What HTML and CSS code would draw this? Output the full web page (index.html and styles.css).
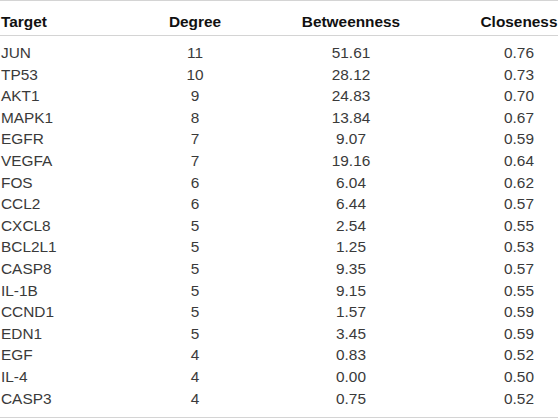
FILE: index.html
```html
<!DOCTYPE html>
<html>
<head>
<meta charset="utf-8">
<link rel="stylesheet" href="styles.css">
</head>
<body>
<table class="data">
  <colgroup>
    <col class="c-target">
    <col class="c-degree">
    <col class="c-between">
    <col class="c-close">
  </colgroup>
  <thead>
    <tr><th class="left">Target</th><th>Degree</th><th>Betweenness</th><th>Closeness</th></tr>
  </thead>
  <tbody>
    <tr><td class="left">JUN</td><td>11</td><td>51.61</td><td>0.76</td></tr>
    <tr><td class="left">TP53</td><td>10</td><td>28.12</td><td>0.73</td></tr>
    <tr><td class="left">AKT1</td><td>9</td><td>24.83</td><td>0.70</td></tr>
    <tr><td class="left">MAPK1</td><td>8</td><td>13.84</td><td>0.67</td></tr>
    <tr><td class="left">EGFR</td><td>7</td><td>9.07</td><td>0.59</td></tr>
    <tr><td class="left">VEGFA</td><td>7</td><td>19.16</td><td>0.64</td></tr>
    <tr><td class="left">FOS</td><td>6</td><td>6.04</td><td>0.62</td></tr>
    <tr><td class="left">CCL2</td><td>6</td><td>6.44</td><td>0.57</td></tr>
    <tr><td class="left">CXCL8</td><td>5</td><td>2.54</td><td>0.55</td></tr>
    <tr><td class="left">BCL2L1</td><td>5</td><td>1.25</td><td>0.53</td></tr>
    <tr><td class="left">CASP8</td><td>5</td><td>9.35</td><td>0.57</td></tr>
    <tr><td class="left">IL-1B</td><td>5</td><td>9.15</td><td>0.55</td></tr>
    <tr><td class="left">CCND1</td><td>5</td><td>1.57</td><td>0.59</td></tr>
    <tr><td class="left">EDN1</td><td>5</td><td>3.45</td><td>0.59</td></tr>
    <tr><td class="left">EGF</td><td>4</td><td>0.83</td><td>0.52</td></tr>
    <tr><td class="left">IL-4</td><td>4</td><td>0.00</td><td>0.50</td></tr>
    <tr><td class="left">CASP3</td><td>4</td><td>0.75</td><td>0.52</td></tr>
  </tbody>
</table>
</body>
</html>
```
FILE: styles.css
```css
html, body {
  margin: 0;
  padding: 0;
  background: #ffffff;
}
.data {
  width: 558px;
  table-layout: fixed;
  border-collapse: collapse;
  font-family: "Liberation Sans", Arial, Helvetica, sans-serif;
  font-size: 15.4px;
}
.c-target { width: 168px; }
.c-degree { width: 54px; }
.c-between { width: 258px; }
.c-close { width: 78px; }

.data th, .data td {
  padding: 0;
  text-align: center;
  white-space: nowrap;
}
.data th {
  color: #111111;
  font-weight: bold;
  line-height: 21px;
  padding-top: 10px;
  padding-bottom: 3px;
}
.data thead tr {
  border-top: 1px solid #d4d4d4;
  border-bottom: 1px solid #d4d4d4;
}
.data td {
  color: #3a3a3a;
  line-height: 21.6px;
}
.data tbody tr:first-child td { padding-top: 6px; }
.data tbody tr:last-child td { padding-bottom: 8px; }
.data tbody tr:last-child { border-bottom: 1px solid #d4d4d4; }
.data .left {
  text-align: left;
  padding-left: 1px;
}
```
